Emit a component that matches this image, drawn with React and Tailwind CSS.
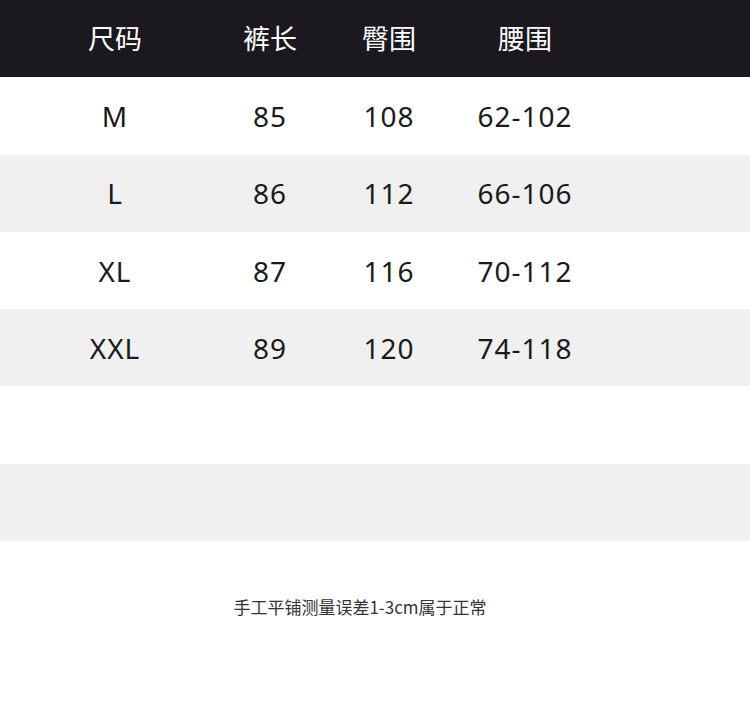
import React from "react";

const rows = [
    ["M", "85", "108", "62-102"],
    ["L", "86", "112", "66-106"],
    ["XL", "87", "116", "70-112"],
    ["XXL", "89", "120", "74-118"],
    ["", "", "", ""],
    ["", "", "", ""],
];

const font = { fontFamily: '"Noto Sans CJK SC", "Noto Sans", sans-serif' };

const Row = ({ cells, className }) => (
    <div className={`grid grid-cols-[230px_80px_158px_114px] items-center h-[77.3px] ${className}`}>
        {cells.map((c, i) => (
            <div key={i} className="text-center whitespace-nowrap">{c}</div>
        ))}
    </div>
);

const App = () => {
    return (
        <div className="w-[750px] h-[713px] bg-white overflow-hidden" style={font}>
            <Row
                cells={["尺码", "裤长", "臀围", "腰围"]}
                className="bg-[#1b1820] text-white text-[27px] leading-none pb-[2px]"
            />
            {rows.map((r, i) => (
                <Row
                    key={i}
                    cells={r}
                    className={`font-['Noto_Sans',sans-serif] text-[28px] tracking-[1px] leading-none text-[#1a1a1a] ${i % 2 === 1 ? "bg-[#f0f0f0]" : "bg-white"}`}
                />
            ))}
            <p className="mt-[54px] pr-[30px] text-center text-[17px] leading-6 text-[#333333]">
                手工平铺测量误差1-3cm属于正常
            </p>
        </div>
    );
};

export default App;
